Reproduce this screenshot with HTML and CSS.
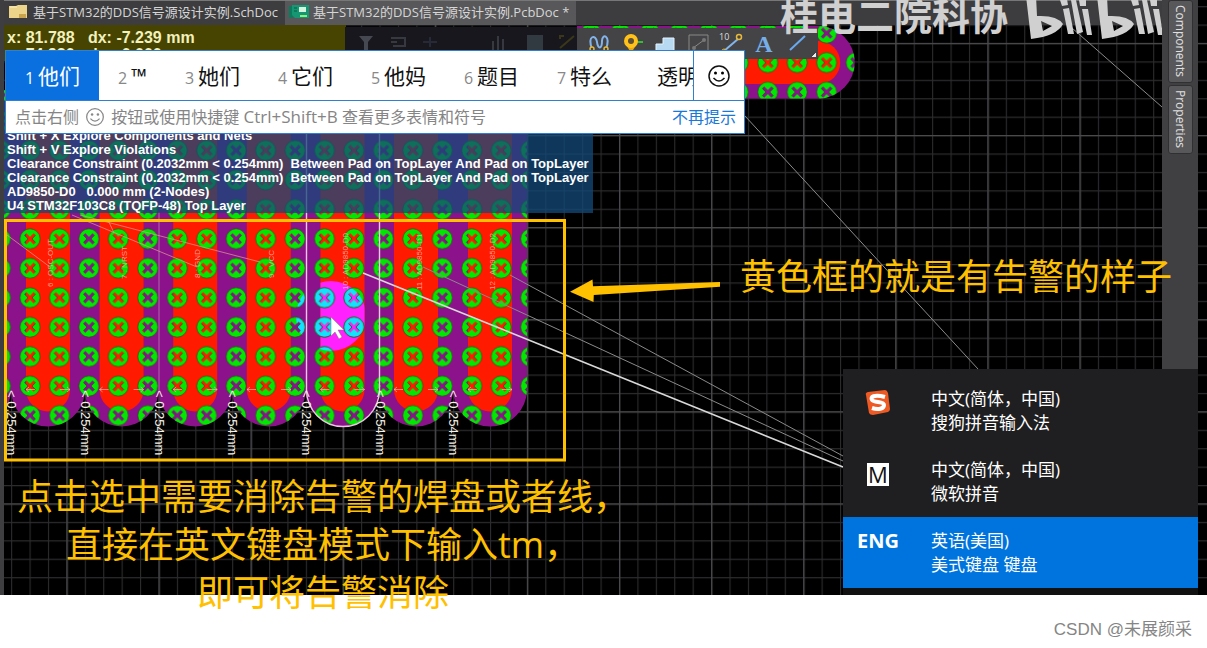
FILE: index.html
```html
<!DOCTYPE html>
<html lang="zh-CN">
<head>
<meta charset="utf-8">
<title>PCB 告警消除</title>
<link rel="stylesheet" href="styles.css">
</head>
<body>
<main class="app">
  <svg class="board" aria-hidden="true">
    <defs>
      <pattern id="minor" x="11.1" y="6.1" width="18.42" height="18.42" patternUnits="userSpaceOnUse">
        <path d="M.5 0V18.42M0 .5H18.42" stroke="#2c2c2e" stroke-width="1.2"/>
      </pattern>
      <pattern id="major" x="66.4" y="42.9" width="92.1" height="92.1" patternUnits="userSpaceOnUse">
        <path d="M.7 0V92.1M0 .7H92.1" stroke="#4a4a4c" stroke-width="1.3"/>
      </pattern>
      <g id="pad" transform="translate(14.72 14.72) rotate(45)">
        <path d="M-10 0A10 10 0 1 0 10 0A10 10 0 1 0 -10 0ZM-6.5-1.4H-1.4V-6.5H1.4V-1.4H6.5V1.4H1.4V6.5H-1.4V1.4H-6.5Z" fill-rule="evenodd"/>
        <path d="M-6.5 1.4H-1.4V6.5M1.4-6.5V-1.4H6.5" fill="none" stroke="#222" stroke-width=".5"/>
        <circle r="10" fill="none" stroke="#2c4a14" stroke-width=".6"/>
      </g>
      <pattern id="pads" x="15.3" y="224.1" width="29.45" height="29.45" patternUnits="userSpaceOnUse">
        <use href="#pad" fill="#00e800"/>
      </pattern>
      <pattern id="padsTop" x="16.8" y="224.6" width="29.45" height="29.45" patternUnits="userSpaceOnUse">
        <use href="#pad" fill="#00e800"/>
      </pattern>
      <pattern id="padsSel" x="15.3" y="224.1" width="29.45" height="29.45" patternUnits="userSpaceOnUse">
        <use href="#pad" fill="#14e0ff"/>
      </pattern>
      <path id="outer" d="M-37 90V389.5A37 37 0 0 0 37 389.5V90Z"/>
      <path id="inner" d="M-22 90V389.5A22 22 0 0 0 22 389.5V90Z"/>
      <clipPath id="outerClip">
        <use href="#outer" x="-26"/><use href="#outer" x="48"/><use href="#outer" x="121.6"/><use href="#outer" x="195.2"/><use href="#outer" x="268.8"/><use href="#outer" x="342.5"/><use href="#outer" x="416"/><use href="#outer" x="490"/>
      </clipPath>
      <clipPath id="innerClip"><use href="#inner" x="342.5"/></clipPath>
      <clipPath id="hover"><circle cx="331" cy="316" r="35"/></clipPath>
      <clipPath id="padArea"><path d="M577 26H819.7A37 36.3 0 0 1 819.7 98.5H577Z"/></clipPath>
    </defs>
    <rect width="100%" height="100%" fill="#000"/>
    <rect width="100%" height="100%" fill="url(#minor)"/>
    <rect width="100%" height="100%" fill="url(#major)"/>

    <g clip-path="url(#outerClip)">
      <rect y="90" width="528" height="340" fill="#8c128c"/>
      <g fill="#ff1a00">
        <use href="#inner" x="48"/><use href="#inner" x="121.6"/><use href="#inner" x="195.2"/><use href="#inner" x="268.8"/><use href="#inner" x="342.5"/><use href="#inner" x="416"/><use href="#inner" x="490"/>
      </g>
      <circle cx="331" cy="316" r="35" fill="#ff22ff" clip-path="url(#innerClip)"/>
      <rect y="90" width="528" height="340" fill="url(#pads)"/>
      <rect x="290" y="275" width="80" height="80" fill="url(#padsSel)" clip-path="url(#hover)"/>
    </g>
    <path d="M306.5 100V389.5A36.5 37 0 0 0 379.5 389.5V100" fill="none" stroke="#edc6e4" stroke-width="1.4"/>
    <path d="M159 212V390" stroke="#c9a0c0" stroke-opacity=".6"/>

    <g clip-path="url(#padArea)">
      <rect x="577" y="26" width="280" height="73" fill="#8c128c"/>
      <path d="M577 41H818.7A21.5 21.5 0 0 1 818.7 84H577Z" fill="#ff1a00"/>
      <rect x="577" y="26" width="280" height="73" fill="url(#padsTop)"/>
    </g>

    <g fill="none" stroke="#8a8a8a">
      <path d="M423 267L843 461M510 275L843 456M745 116L978 369M1072 28L1162 107"/>
      <path d="M363 273L843 467" stroke="#d8d8d8" stroke-width="1.6"/>
      <path d="M7 235L50 267M72 215L197 267M80 215L260 262M108 220L114 233" stroke="#e0a090" stroke-opacity=".7"/>
    </g>

    <g class="arrows" fill="none" stroke="#f0c0c0" stroke-opacity=".65">
      <path id="dim" d="M26 389.500H35M29 387L26 389.500L29 392M60 389.500H70M67 387L70 389.500L67 392"/>
      <use href="#dim" x="73.600"/><use href="#dim" x="147.200"/><use href="#dim" x="221"/><use href="#dim" x="294.500"/><use href="#dim" x="368"/><use href="#dim" x="442"/>
    </g>

    <g class="pin-name">
      <text transform="translate(53 287) rotate(-90)">6 : OSC-OUT</text>
      <text transform="translate(127 279) rotate(-90)">7 : NRST</text>
      <text transform="translate(200 278) rotate(-90)">8 : GND</text>
      <text transform="translate(274 278) rotate(-90)">9 : VCC</text>
      <text transform="translate(348 290) rotate(-90)">10 : AD9850-D0</text>
      <text transform="translate(422 290) rotate(-90)">11 : AD9850-D1</text>
      <text transform="translate(495 290) rotate(-90)">12 : AD9850-D2</text>
    </g>
    <g class="clearance">
      <text transform="translate(7 390) rotate(90)">&lt; 0.254mm</text>
      <text transform="translate(81 390) rotate(90)">&lt; 0.254mm</text>
      <text transform="translate(155 390) rotate(90)">&lt; 0.254mm</text>
      <text transform="translate(228 390) rotate(90)">&lt; 0.254mm</text>
      <text transform="translate(302 390) rotate(90)">&lt; 0.254mm</text>
      <text transform="translate(376 390) rotate(90)">&lt; 0.254mm</text>
      <text transform="translate(449 390) rotate(90)">&lt; 0.254mm</text>
    </g>
    <path d="M331 317V336L335 332L339 339L342 337L338 330H344Z" fill="#fff" stroke="#777" stroke-width=".5"/>
    <rect x="5.500" y="220.500" width="559" height="239.500" fill="none" stroke="#ffc000" stroke-width="3"/>
    <path d="M570 291.700L592.500 279.500L593 286.300L720 282V286.700L593.800 295L593.500 302Z" fill="#ffc000"/>
  </svg>

  <section class="workspace">
    <nav class="tabs">
      <button class="tab">
        <svg width="18" height="14" viewBox="0 0 18 14"><path d="M0 1H7L9 0H18V13H0Z" fill="#ecd48a"/><path d="M10 9H17V13H10Z" fill="#c9a64e"/><path d="M1 2H8" stroke="#fff2c0"/></svg>
        <span>基于STM32的DDS信号源设计实例.SchDoc</span>
      </button>
      <button class="tab active">
        <svg width="20" height="14" viewBox="0 0 20 14"><path d="M0 1H4V13H0Z" fill="#0c7a5c"/><path d="M3 0H20V13H6L3 10Z" fill="#169673"/><path d="M10 2H17V7H10Z" fill="#d5f5df"/><path d="M11 11H18" stroke="#8df07a" stroke-width="2"/><path d="M5 3H8M5 6H8" stroke="#0a5c46"/></svg>
        <span>基于STM32的DDS信号源设计实例.PcbDoc *</span>
      </button>
    </nav>
    <div class="coords"><p>x: 81.788 &nbsp; dx: -7.239 mm</p><p>y: 74.930 &nbsp; dy: -0.000 mm</p></div>
    <div class="dim-tools">
      <svg width="232" height="23" viewBox="0 0 232 23" fill="none" stroke="#363940" stroke-width="2"><path d="M14 9H28L23 15V23H19V15Z" fill="#454850" stroke="none"/><path d="M46 11H60V19H48M46 15H52"/><path d="M78 15H92M85 10V20" stroke="#252a36"/><path d="M148 14V23M153 9V23M158 12V23"/><path d="M182 8H198V23H182Z" fill="#303a40" stroke="none"/><path d="M215 21L229 9M215 12V9H219" stroke="#3a3818"/></svg>
    </div>
    <div class="tools">
      <button aria-label="蛇形布线"><svg viewBox="0 0 24 24"><path d="M5 18C0 4 9 3 10 11S15 18 15 10S24 4 19 18" fill="none" stroke="#83b5ec" stroke-width="2"/><circle cx="5" cy="18" r="2" fill="#444" stroke="#e8b838" stroke-width="1.400"/><circle cx="19" cy="18" r="2" fill="#444" stroke="#e8b838" stroke-width="1.400"/></svg></button>
      <button aria-label="过孔"><svg viewBox="0 0 24 24"><path d="M5 12L11 22L17 13Z" fill="#eaa80c"/><path d="M15 11H23" stroke="#32bd32" stroke-width="2"/><circle cx="11" cy="10" r="7" fill="#ffc21b"/><circle cx="11" cy="10" r="3" fill="#5a4e35"/></svg></button>
      <button aria-label="铺铜"><svg viewBox="0 0 24 24"><path d="M3 13H10V7H21V20H3Z" fill="#b7d9f1" stroke="#e4f3ff"/></svg></button>
      <button aria-label="区域"><svg viewBox="0 0 24 24"><path d="M3 4H22V23H3Z" fill="none" stroke="#888"/><path d="M7 17L18 9" stroke="#888"/><circle cx="8" cy="17" r="2" fill="#777"/><circle cx="18" cy="9" r="2" fill="#777"/></svg></button>
      <button aria-label="尺寸" class="measure"><span>10</span><svg viewBox="0 0 24 24"><path d="M5 20L19 8" stroke="#83b5ec" stroke-width="2"/><circle cx="20" cy="6" r="2.500" fill="none" stroke="#e8b838" stroke-width="1.500"/><circle cx="5" cy="20" r="2" fill="none" stroke="#e8b838"/></svg></button>
      <button class="letter">A</button>
      <button aria-label="直线"><svg viewBox="0 0 24 24"><path d="M5 19L20 5" stroke="#68aaf0" stroke-width="2"/></svg></button>
    </div>
    <div class="hud">
      <p>Shift + X Explore Components and Nets</p>
      <p>Shift + V Explore Violations</p>
      <p>Clearance Constraint (0.2032mm &lt; 0.254mm) &nbsp;Between Pad on TopLayer And Pad on TopLayer</p>
      <p>Clearance Constraint (0.2032mm &lt; 0.254mm) &nbsp;Between Pad on TopLayer And Pad on TopLayer</p>
      <p>AD9850-D0 &nbsp; 0.000 mm (2-Nodes)</p>
      <p>U4 STM32F103C8 (TQFP-48) Top Layer</p>
    </div>
    <div class="watermark">
      <span>桂电二院科协</span>
      <svg role="img" aria-label="bilibili" width="140" height="40" viewBox="0 0 140 40">
        <g id="half"><path d="M0-4H10L11 16Q31 15 37 24Q31 36 5 39Z M15 21L17 31L26 26Z" fill-rule="evenodd"/><path d="M34 0L41 -1L42 5L36 6ZM37 9L43 8L48 34L42 34ZM45 0L50 0L57 32L51 34ZM53 0L60 0L60 6L54 6ZM56 9L62 9L66 35L61 35Z"/></g>
        <use href="#half" x="71"/>
      </svg>
    </div>
  </section>

  <aside class="sidebar">
    <button>Components</button>
    <button>Properties</button>
  </aside>

  <section class="ime">
    <div class="candidates">
      <ol>
        <li class="chosen"><small>1</small>他们</li>
        <li><small>2</small>™</li>
        <li><small>3</small>她们</li>
        <li><small>4</small>它们</li>
        <li><small>5</small>他妈</li>
        <li><small>6</small>题目</li>
        <li><small>7</small>特么</li>
        <li><small></small>透明</li>
      </ol>
      <button class="emoji" aria-label="表情"><svg width="24" height="24" viewBox="0 0 24 24"><circle cx="12" cy="12" r="10" fill="none" stroke="#111" stroke-width="1.500"/><circle cx="8.500" cy="9" r="1.500"/><circle cx="15.500" cy="9" r="1.500"/><path d="M6.500 14Q12 20 17.500 14" fill="none" stroke="#111" stroke-width="1.500"/></svg></button>
    </div>
    <div class="hint">
      <p>点击右侧 <svg width="20" height="20" viewBox="0 0 24 24"><circle cx="12" cy="12" r="10" fill="none" stroke="#888" stroke-width="1.500"/><circle cx="8.500" cy="9" r="1.500" fill="#888"/><circle cx="15.500" cy="9" r="1.500" fill="#888"/><path d="M6.500 14Q12 20 17.500 14" fill="none" stroke="#888" stroke-width="1.500"/></svg> 按钮或使用快捷键 <span class="keys">Ctrl+Shift+B</span> 查看更多表情和符号</p>
      <button>不再提示</button>
    </div>
  </section>

  <p class="note note-right">黄色框的就是有告警的样子</p>
  <p class="note note-bottom">点击选中需要消除告警的焊盘或者线，<br>直接在英文键盘模式下输入tm，<br>即可将告警消除</p>

  <section class="languages">
    <button>
      <span class="mark"><svg width="26" height="26" viewBox="0 0 26 26"><path d="M1 5Q0 3 3 2L20 0Q22 0 23 3L25 19Q25 21 23 22L8 25Q5 25 4 23Z" fill="#ee5a24"/><path d="M20 7C9 4 5 7 7 10S19 11 19 15S13 20 7 18" fill="none" stroke="#fff" stroke-width="4"/></svg></span>
      <span>中文(简体，中国)<br>搜狗拼音输入法</span>
    </button>
    <button>
      <span class="mark"><b class="ms">M</b></span>
      <span>中文(简体，中国)<br>微软拼音</span>
    </button>
    <button class="current">
      <span class="mark"><b class="eng">ENG</b></span>
      <span>英语(美国)<br>美式键盘 键盘</span>
    </button>
  </section>
</main>
<footer>CSDN @未展颜采</footer>
</body>
</html>
```
FILE: styles.css
```css
* { box-sizing: border-box; }
body {
  margin: 0;
  min-height: 100vh;
  display: flex;
  flex-direction: column;
  background: #fff;
  font-family: "Open Sans", "Noto Sans CJK SC", sans-serif;
}
p, ol { margin: 0; padding: 0; }
button {
  margin: 0;
  padding: 0;
  border: 0;
  background: none;
  color: inherit;
  font: inherit;
  text-align: left;
}
svg { flex: none; }

.app {
  position: relative;
  flex: 1;
  display: flex;
  padding-right: 9px;
  background: #000;
}
.board {
  position: absolute;
  inset: 0;
  width: 100%;
  height: 100%;
}
.pin-name {
  font: 8px "Liberation Sans", sans-serif;
  fill: #ffc8b8;
  fill-opacity: .75;
}
.clearance {
  font: 13px "Liberation Sans", sans-serif;
  fill: #f4f0e4;
}

.workspace {
  position: relative;
  flex: 1;
  min-width: 0;
  overflow: hidden;
  border-left: 4px solid #3e3e40;
}
.tabs {
  display: flex;
  height: 25px;
  margin-left: -4px;
  background: #3d3d3f;
  border-top: 1px solid #777;
}
.tab {
  display: flex;
  align-items: center;
  gap: 6px;
  padding: 0 7px 3px 9px;
  color: #d6d6d6;
  font-size: 13px;
  line-height: 20px;
  white-space: nowrap;
}
.tab.active { padding-left: 4px; gap: 4px; background: #58585a; }

.coords {
  position: absolute;
  top: 25px;
  left: 0;
  width: 342px;
  height: 36px;
  padding: 4px 3px;
  background: #464400;
  color: #f2f0bc;
  font: bold 16px/17px "Liberation Sans", sans-serif;
}
.dim-tools {
  position: absolute;
  top: 27px;
  left: 341px;
  width: 232px;
  height: 30px;
  background: #17171d;
}
.tools {
  position: absolute;
  top: 28px;
  left: 573px;
  display: flex;
  gap: 9px;
  padding: 3px 9px 4px 10px;
  background: #444446;
}
.tools::after {
  content: "";
  align-self: flex-end;
  width: 4px;
  height: 4px;
  margin: 0 -7px -2px -6px;
  background: linear-gradient(135deg, transparent 50%, #eee 50%);
}
.tools button {
  display: flex;
  justify-content: center;
  width: 24px;
  height: 24px;
}
.tools svg { width: 24px; height: 24px; }
.tools .letter {
  color: #76aee8;
  font: bold 24px/26px "Liberation Serif", serif;
}
.tools .measure { position: relative; }
.measure span {
  position: absolute;
  top: 0;
  left: 0;
  color: #ddd;
  font-size: 9px;
  line-height: 12px;
}

.hud {
  position: absolute;
  top: 101px;
  left: 0;
  height: 112px;
  display: flex;
  flex-direction: column;
  justify-content: flex-end;
  padding: 0 4px 0 3px;
  background: rgba(18, 72, 120, .76);
  color: #fff;
  font: bold 13px/14px "Liberation Sans", sans-serif;
  white-space: nowrap;
}

.watermark {
  position: absolute;
  top: 0;
  left: 776px;
  display: flex;
  gap: 18px;
  height: 40px;
  overflow: hidden;
  color: #d0d0d0;
  font: bold 38px/28px "Noto Sans CJK SC", sans-serif;
  white-space: nowrap;
}
.watermark svg { fill: #d0d0d0; }

.sidebar {
  position: relative;
  display: flex;
  flex-direction: column;
  align-items: center;
  gap: 2px;
  width: 36px;
  background: #404042;
}
.sidebar button {
  width: 25px;
  padding: 4px 0 5px;
  border: 1px solid #303032;
  border-radius: 3px;
  background: #58585a;
  color: #e0e0e0;
  font: 12px/23px "Open Sans", sans-serif;
  writing-mode: vertical-rl;
}

.ime {
  position: absolute;
  top: 50px;
  left: 5px;
  width: 740px;
  border: 1px solid #2f80d0;
  background: #fff;
}
.candidates { display: flex; height: 50px; border-bottom: 1px solid #2f80d0; }
.candidates ol {
  flex: 1;
  display: flex;
  min-width: 0;
  overflow: hidden;
  list-style: none;
}
.candidates li {
  flex: none;
  display: flex;
  align-items: baseline;
  gap: 4px;
  padding: 0 19px;
  color: #111;
  font-size: 21px;
  line-height: 50px;
}
.candidates small { width: 9px; color: #888; font-size: 16px; }
.candidates small:empty { width: 3px; }
.candidates .chosen { background: #0a70e0; color: #fff; }
.chosen small { color: #fff; }
.emoji {
  display: flex;
  align-items: center;
  justify-content: center;
  width: 51px;
  border-left: 1px solid #2f80d0;
}
.hint {
  display: flex;
  align-items: center;
  justify-content: space-between;
  padding: 4px 8px 4px 9px;
  color: #858585;
  font-size: 16px;
  line-height: 24px;
  white-space: nowrap;
}
.hint svg { margin: 0 2px; vertical-align: -4px; }
.hint .keys { font-size: 17px; }
.hint button { color: #1878d8; }

.note {
  position: absolute;
  color: #ffc000;
  font-size: 36px;
  line-height: 48px;
  white-space: nowrap;
}
.note-right { top: 253px; left: 740px; }
.note-bottom { top: 473px; left: 17px; text-align: center; }

.languages {
  position: absolute;
  right: 9px;
  bottom: 0;
  width: 355px;
  padding: 6px 0 7px;
  background: linear-gradient(#1f1f21 219px, #111 219px);
  color: #fff;
  font-size: 17px;
  line-height: 24px;
}
.languages button {
  display: flex;
  gap: 18px;
  width: 100%;
  padding: 12px 0 11px;
}
.languages .current { background: #0074de; }
.mark {
  display: flex;
  justify-content: center;
  align-items: center;
  width: 70px;
  height: 32px;
}
.ms {
  width: 22px;
  background: #fff;
  color: #111;
  font-size: 22px;
  font-weight: 400;
  line-height: 23px;
  text-align: center;
}
.eng { align-self: flex-start; font-size: 20px; line-height: 24px; }

footer {
  padding: 23px 15px 6px;
  color: #858585;
  font: 17px/24px "Liberation Sans", "Noto Sans CJK SC", sans-serif;
  text-align: right;
}
```
